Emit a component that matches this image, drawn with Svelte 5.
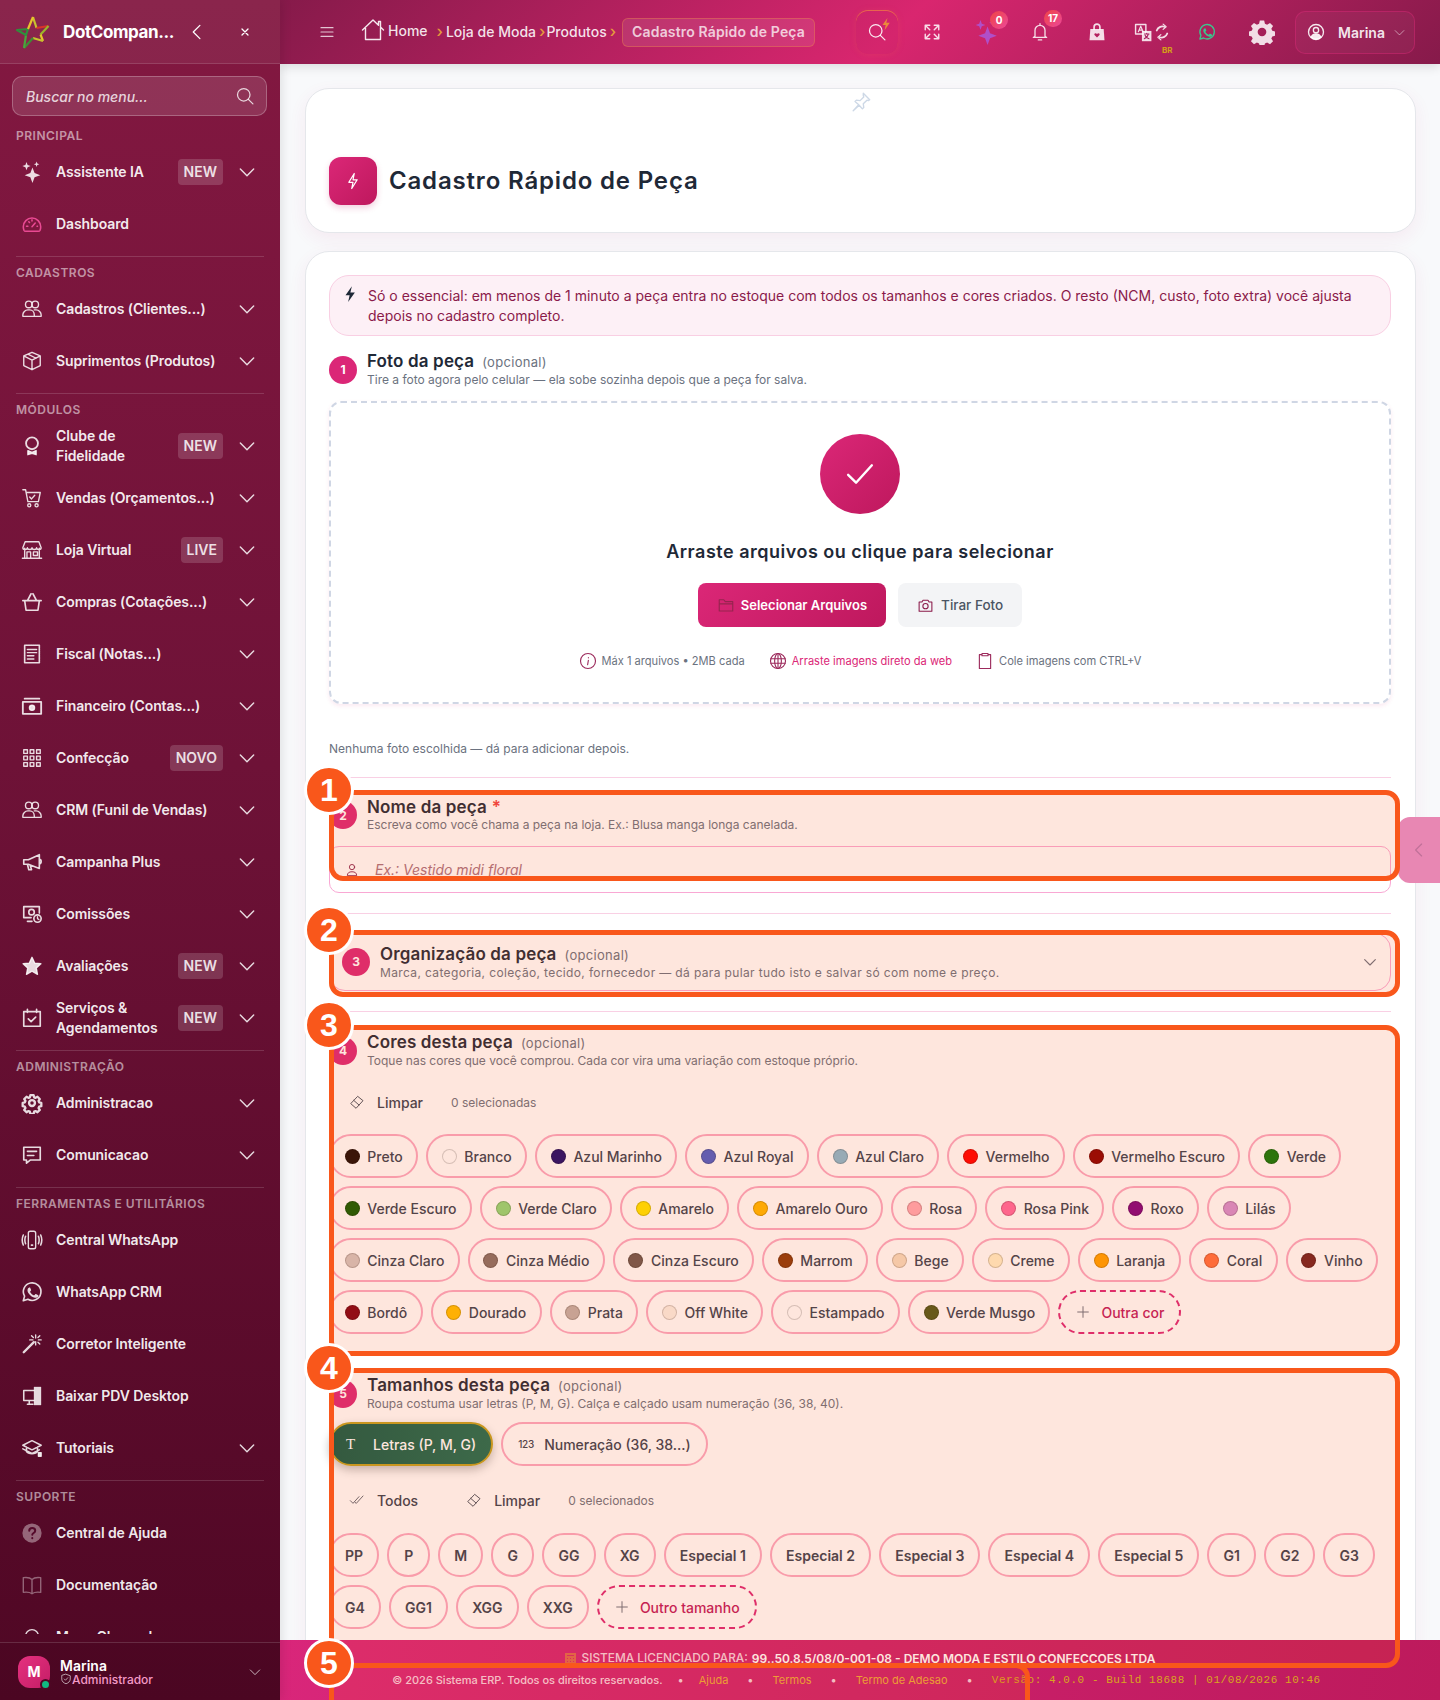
<script>
  const icons = {
    sparkles: '<path fill="currentColor" stroke="none" d="M12.500 7l2.300 6.200 6.200 2.300-6.200 2.300-2.300 6.200-2.300-6.200-6.200-2.300 6.200-2.300zM6 1l1.200 3.300L10.500 5.500 7.200 6.700 6 10 4.800 6.700 1.500 5.500l3.300-1.200zM17 0.500l.8 2.200 2.200.8-2.200.8-.8 2.200-.8-2.200-2.200-.8 2.200-.8z"/>',
    gauge: '<path d="M5 20h14a2 2 0 0 0 1.800-1.200A9.600 9.600 0 0 0 21.500 15a9.500 9.500 0 0 0-19 0c0 1.300.3 2.600.7 3.800A2 2 0 0 0 5 20z" stroke-width="1.700"/><path d="M12 15l3.500-4M6 14.500h1.500M17.500 14.500H18M8.500 9.500l.8.8M12 7.500v1.200" stroke-width="1.700"/>',
    users: '<circle cx="8.500" cy="7" r="3.600"/><circle cx="15.500" cy="7" r="3.600"/><path d="M2 20v-1.500C2 15.500 4.500 13 7.500 13h2c3 0 5 2.500 5 5.500V20zM14.500 13h2c3 0 5.500 2.500 5.500 5.500V20h-7.500"/>',
    box: '<path d="M12 2.500l9 4v10.500l-9 4.500-9-4.500V6.500zM3 6.500l9 4.500 9-4.500M12 11v10.500M7.500 4.500l9 4.500"/>',
    award: '<circle cx="12" cy="9" r="6.500" stroke-width="2"/><path fill="currentColor" d="M7.500 17l4.500 2 4.500-2v4.500L12 20l-4.500 1.500z"/>',
    cart: '<path d="M2 3h3l2.500 13h11.500l2-10H6M9.500 11l2 2 3.500-4"/><circle cx="9" cy="20" r="1.700"/><circle cx="17" cy="20" r="1.700"/>',
    store: '<path d="M4 10v11h16V10M2 9.500L4.500 3h15L22 9.500c0 1.500-1.700 2-2.500 2s-2.500-.5-2.500-2c0 1.500-1.700 2-2.500 2s-2.500-.5-2.500-2c0 1.500-1.700 2-2.500 2S7 11 7 9.500C7 11 5.300 11.500 4.500 11.500S2 11 2 9.500zM1.500 21h21M6.500 14h4v7h-4zM13.500 14h4.500v4h-4.500z"/>',
    basket: '<path d="M2 10.500h20M4 10.500L5.500 21h13L20 10.500M7 10.500L11 3M17 10.500L13 3" stroke-width="1.800"/>',
    receipt: '<path d="M4 2.500h16v19H4z" stroke-width="1.800" stroke-dasharray="1.500 .5"/><path d="M7 7h10M7 10.500h10M7 14h7M7 17.500h7" stroke-width="1.600"/>',
    cash: '<path d="M2 7.500h20v13H2zM4 4h16" stroke-width="2"/><circle cx="12" cy="14" r="2.800" fill="currentColor"/>',
    grid: '<g stroke-width="1.500"><rect x="3" y="3" width="4" height="4"/><rect x="10" y="3" width="4" height="4"/><rect x="17" y="3" width="4" height="4"/><rect x="3" y="10" width="4" height="4"/><rect x="10" y="10" width="4" height="4"/><rect x="17" y="10" width="4" height="4"/><rect x="3" y="17" width="4" height="4"/><rect x="10" y="17" width="4" height="4"/><rect x="17" y="17" width="4" height="4"/></g>',
    megaphone: '<path d="M3 9.500h5L20 4v15L8 14.500H3zM7 14.500l1.500 6h3l-1.500-5M20 9c1.500 0 2 1 2 2.500S21.500 14 20 14" stroke-width="1.800"/>',
    monitor: '<path d="M20 11V4H3v12h8M7 20h5" stroke-width="1.800"/><circle cx="11.500" cy="10" r="3" stroke-width="1.800"/><circle cx="18" cy="17" r="4" stroke-width="1.800"/><path d="M18 15v2l1.500 1"/>',
    star: '<path fill="currentColor" d="M12 2.500l2.900 6.300 6.800.8-5 4.700 1.300 6.800-6-3.400-6 3.400 1.300-6.800-5-4.700 6.800-.8z"/>',
    calendar: '<path d="M3 5h18v16H3zM7 2.500V6M17 2.500V6" stroke-width="1.800"/><path d="M8 13l3 3 5-5" stroke-width="1.800"/>',
    cog: '<path d="M10 2.500h4l.6 2.600 1.700.7 2.300-1.400 2.800 2.800-1.400 2.300.7 1.700 2.600.6v4l-2.600.6-.7 1.700 1.400 2.300-2.800 2.800-2.300-1.400-1.700.7-.6 2.600h-4l-.6-2.600-1.700-.7-2.300 1.400-2.800-2.800 1.400-2.300-.7-1.700-2.600-.6v-4l2.600-.6.7-1.700-1.400-2.300 2.800-2.800 2.300 1.400 1.700-.7z" transform="translate(1.200 1.200) scale(.9)" stroke-width="2.800"/><circle cx="12" cy="12" r="3.200" stroke-width="2.600"/>',
    chat: '<path d="M3 3.500h18v14H10l-4 3.500v-3.500H3zM7 8h10M7 12.500h7" stroke-width="1.800"/>',
    phonewave: '<rect x="8" y="2.500" width="8" height="19" rx="2"/><path d="M11.500 17.500h1" stroke-width="2"/><path d="M5 8c-1 2.500-1 5.500 0 8M2.500 6.500c-1.500 3.500-1.500 7.500 0 11M19 8c1 2.500 1 5.500 0 8M21.500 6.500c1.500 3.500 1.500 7.500 0 11" stroke-width="1.700"/>',
    whatsapp: '<path stroke-width="1.800" d="M2.500 21.500l1.400-5A9.600 9.600 0 1 1 7.500 20z"/><path fill="currentColor" stroke="none" d="M8.900 6.900c-.3 0-.8.1-1.200.6-.4.5-1.200 1.300-1.200 3s1.200 3.300 1.400 3.500c.2.200 2.400 3.700 5.800 5 2.900 1.100 3.500.9 4.100.8.6-.1 2-.8 2.300-1.600.3-.8.3-1.500.2-1.600-.1-.1-.3-.2-.7-.4l-2.400-1.200c-.3-.1-.6-.2-.8.2-.2.3-.9 1.100-1.100 1.300-.2.2-.4.3-.8.1-.4-.2-1.500-.6-2.800-1.700-1-.9-1.700-2-1.900-2.400-.2-.4 0-.6.2-.8l.6-.7c.2-.2.2-.4.4-.6.1-.2.1-.5 0-.7l-1.100-2.600c-.3-.6-.5-.6-.8-.6z" transform="translate(1.500 1.300) scale(.86)"/>',
    wand: '<path d="M3 21L14 10" stroke-width="2.600"/><path d="M16 2v3.500M16 9.500V13M9.500 7.500H13M19 7.500h3M11.500 3l2 2M20.500 3l-2 2M20.500 12l-2-2"/>',
    pdv: '<path d="M14 6H3v11h11M7 21h6M9 17v4" stroke-width="1.700"/><path fill="currentColor" stroke="none" d="M14 2h8v20h-8z"/>',
    cap: '<path d="M12 4L2 9l10 5 10-5zM6 11v5c2 3 10 3 12 0v-5M2 13l10 5 8-4" stroke-width="1.700"/><rect x="19" y="17" width="3" height="4" fill="currentColor"/>',
    help: '<circle cx="12" cy="12" r="10.500" fill="currentColor" stroke="none"/><path d="M9 9.500c0-4 6.500-4 6.500 0 0 2.500-3.200 2.500-3.200 4.500M12.300 17.500v.3" stroke="#550a2b" stroke-width="2.200"/>',
    book: '<path d="M12 6c-2-2-6-2.500-9.500-2V20c3.500-.5 7.500 0 9.500 1.500 2-1.500 6-2 9.500-1.500V4C18 3.500 14 4 12 6zM12 6v15.500"/>',
    headset: '<path d="M5 15V11a7 7 0 0 1 14 0v4"/>',
    chevron: '<path d="M4 8.500l8 8 8-8" stroke-width="1.700"/>',
    search: '<circle cx="10.500" cy="10.500" r="7.500"/><path d="M16 16l5.500 5.500"/>',
    menu: '<path d="M3 5.500h18M3 12h18M3 18.500h18" stroke-width="1.800"/>',
    house: '<path d="M1.500 12L12 2l5.500 5.200V3.500h2v5.600l3 2.900M4.500 10v11.500h15V10" stroke-width="1.400"/>',
    expand: '<path d="M9 3H3v6M15 3h6v6M9 21H3v-6M15 21h6v-6M3 3l6 6M21 3l-6 6M3 21l6-6M21 21l-6-6" stroke-width="1.900"/>',
    bell: '<path d="M6 17V10a6 6 0 0 1 12 0v7l2 1.500H4zM12 2v2M10 21.500h4" stroke-width="1.600"/>',
    bag: '<path fill="currentColor" stroke="none" d="M4 8.500h16l1 13.500H3z"/><path d="M8.500 9V6a3.500 3.500 0 0 1 7 0v3" stroke-width="2"/><path fill="#b5225f" stroke="none" d="M12 18.500l-3-3c-1-1.500 1.500-3 3-1 1.500-2 4-.5 3 1z"/>',
    translate: '<path d="M2 2h13v12H2z" stroke-width="1.800"/><path d="M5.500 11l3-7 3 7M6.500 9h4" stroke-width="1.500"/><path fill="currentColor" stroke="none" d="M10 10h12v13H10z"/><path d="M13 14h6M16 13v1M18 14c-.5 3-3 5-5 6M14 15.500c.7 2 3 4 5 4.500" stroke="#a8205f" stroke-width="1.300"/>',
    refresh: '<path d="M5 10a8 8 0 0 1 10-5M19 14a8 8 0 0 1-10 5" stroke-width="2.400"/><path d="M13.500 1.500L17.500 5l-4 3.500M10.500 22.500L6.500 19l4-3.500" stroke-width="1.600" />',
    gear: '<path fill="currentColor" stroke="none" fill-rule="evenodd" d="M10 1h4l.7 3 2 .9 2.700-1.600 2.800 2.800-1.600 2.700.9 2 3 .7v4l-3 .7-.9 2 1.600 2.700-2.800 2.800-2.700-1.600-2 .9-.7 3h-4l-.7-3-2-.9-2.700 1.600-2.800-2.800 1.600-2.700-.9-2-3-.7v-4l3-.7.9-2-1.600-2.700 2.800-2.800 2.700 1.600 2-.9zM12 8a4 4 0 1 0 0 8 4 4 0 0 0 0-8z" transform="translate(0 .5) scale(1 .96)"/>',
    user: '<circle cx="12" cy="12" r="10" stroke-width="1.800"/><circle cx="12" cy="9.500" r="3.500" stroke-width="1.800"/><path fill="currentColor" d="M5.500 19c1-3.500 3.500-4.500 6.500-4.500s5.500 1 6.500 4.500c-3 3.500-10 3.500-13 0z"/>',
    pin: '<path d="M14.500 2.500l7 7-1.500 1-1.500-.5-4 4 .5 4-1.500 1.500-3.500-4-6.500 6 6-6.500-4-3.500 1.500-1.500 4 .5 4-4-.5-1.500z"/>',
    bolt: '<path d="M13.500 3L7 13.500h5L10.500 21 17 10.500h-5z"/>',
    boltfill: '<path fill="currentColor" stroke="none" d="M14.500 1.500L6 13.500h5.500L9.500 22.500 18.500 10h-6z"/>',
    check: '<path d="M4.500 12.500l5 5 10-11"/>',
    folder: '<path d="M3 5h6l2 2.500h10V20H3zM3 10.500h18"/>',
    camera: '<path d="M3 7h4l1.500-2.500h7L17 7h4v13H3z"/><circle cx="12" cy="13" r="3.700"/>',
    info: '<circle cx="12" cy="12" r="10"/><path d="M12.500 7.500v.3M12.500 11l-1 6"/>',
    globe: '<circle cx="12" cy="12" r="10"/><ellipse cx="12" cy="12" rx="4.500" ry="10"/><path d="M2.500 9h19M2.500 15h19M12 2v20"/>',
    clipboard: '<path d="M8 3.500H4.500V22h15V3.500H16M8 2h8v3H8z"/>',
    person: '<circle cx="12" cy="7" r="4.500"/><path d="M4 21c0-4 3-6 8-6s8 2 8 6z"/>',
    eraser: '<path d="M3 14L13 3.500l8 6.500-10 11z"/><path d="M7 9.500l8 7"/>',
    checks: '<path d="M2 13l4 4L15 7M9 15.500L11 17 21 6" stroke-width="1.300"/>',
    plus: '<path d="M12 4v16M4 12h16"/>',
    left: '<path d="M15.500 4l-8 8 8 8"/>',
    close: '<path d="M6 6l12 12M18 6L6 18" stroke-width="2.600"/>',
    shield: '<path d="M12 2.500l8.500 3V12c0 5-4 8-8.500 9.500C7.500 20 3.500 17 3.500 12V5.500zM8.500 12l2.500 2.500 4.500-5"/>'
  };

  const nav = [
    { label: 'PRINCIPAL', items: [
      { text: 'Assistente IA', icon: 'sparkles', badge: 'NEW', more: true },
      { text: 'Dashboard', icon: 'gauge', tone: 'pink' }
    ]},
    { label: 'CADASTROS', items: [
      { text: 'Cadastros (Clientes...)', icon: 'users', more: true },
      { text: 'Suprimentos (Produtos)', icon: 'box', more: true }
    ]},
    { label: 'MÓDULOS', items: [
      { text: 'Clube de Fidelidade', icon: 'award', badge: 'NEW', more: true },
      { text: 'Vendas (Orçamentos...)', icon: 'cart', more: true },
      { text: 'Loja Virtual', icon: 'store', badge: 'LIVE', more: true },
      { text: 'Compras (Cotações...)', icon: 'basket', more: true },
      { text: 'Fiscal (Notas...)', icon: 'receipt', more: true },
      { text: 'Financeiro (Contas...)', icon: 'cash', more: true },
      { text: 'Confecção', icon: 'grid', badge: 'NOVO', more: true },
      { text: 'CRM (Funil de Vendas)', icon: 'users', more: true },
      { text: 'Campanha Plus', icon: 'megaphone', more: true },
      { text: 'Comissões', icon: 'monitor', more: true },
      { text: 'Avaliações', icon: 'star', badge: 'NEW', more: true },
      { text: 'Serviços & Agendamentos', icon: 'calendar', badge: 'NEW', more: true }
    ]},
    { label: 'ADMINISTRAÇÃO', items: [
      { text: 'Administracao', icon: 'cog', more: true },
      { text: 'Comunicacao', icon: 'chat', more: true }
    ]},
    { label: 'FERRAMENTAS E UTILITÁRIOS', items: [
      { text: 'Central WhatsApp', icon: 'phonewave' },
      { text: 'WhatsApp CRM', icon: 'whatsapp' },
      { text: 'Corretor Inteligente', icon: 'wand' },
      { text: 'Baixar PDV Desktop', icon: 'pdv' },
      { text: 'Tutoriais', icon: 'cap', more: true }
    ]},
    { label: 'SUPORTE', items: [
      { text: 'Central de Ajuda', icon: 'help', tone: 'dim' },
      { text: 'Documentação', icon: 'book', tone: 'dim' },
      { text: 'Meus Chamados', icon: 'headset' }
    ]}
  ];

  const colors = [
    ['Preto', '#1a0a05'], ['Branco', '#ffffff'], ['Azul Marinho', '#1a0a6e'], ['Azul Royal', '#4a5fc9'],
    ['Azul Claro', '#87b9d0'], ['Vermelho', '#ff0000'], ['Vermelho Escuro', '#8b0000'], ['Verde', '#0a7a0a'],
    ['Verde Escuro', '#0d5c00'], ['Verde Claro', '#90d97a'], ['Amarelo', '#ffe600'], ['Amarelo Ouro', '#ffb800'],
    ['Rosa', '#ffa8b4'], ['Rosa Pink', '#ff69a0'], ['Roxo', '#800080'], ['Lilás', '#d48fd0'],
    ['Cinza Claro', '#d3c5c0'], ['Cinza Médio', '#857068'], ['Cinza Escuro', '#6b5850'], ['Marrom', '#8b3a0a'],
    ['Bege', '#f5dcc0'], ['Creme', '#fff0c8'], ['Laranja', '#ffa000'], ['Coral', '#ff7040'],
    ['Vinho', '#722020'], ['Bordô', '#800015'], ['Dourado', '#ffc000'], ['Prata', '#c0b0a8'],
    ['Off White', '#faf0e6'], ['Estampado', '#ffffff'], ['Verde Musgo', '#4f5a1a']
  ];

  const sizes = ['PP', 'P', 'M', 'G', 'GG', 'XG', 'Especial 1', 'Especial 2', 'Especial 3', 'Especial 4', 'Especial 5', 'G1', 'G2', 'G3', 'G4', 'GG1', 'XGG', 'XXG'];

  // marcações laranja por cima do print
  const marks = [
    { n: 1, x: 329, y: 790, w: 1071, h: 91 },
    { n: 2, x: 329, y: 930, w: 1071, h: 67 },
    { n: 3, x: 329, y: 1025, w: 1071, h: 331 },
    { n: 4, x: 329, y: 1368, w: 1071, h: 300 },
    { n: 5, x: 329, y: 1663, w: 701, h: 60 }
  ];
</script>

{#snippet icon(name, size)}
  <svg class="ic" viewBox="0 0 24 24" width={size} height={size} fill="none" stroke="currentColor" stroke-width="1.5" stroke-linecap="round" stroke-linejoin="round">{@html icons[name]}</svg>
{/snippet}

{#snippet stepHead(n, title, note, sub, wide)}
  <div class="step-head">
    <span class="step-num">{n}</span>
    <div>
      <div class="step-title">{title}{#if note}<span class="opt">{note}</span>{:else}<span class="req">*</span>{/if}</div>
      <div class="step-sub" class:wide>{sub}</div>
    </div>
  </div>
{/snippet}

<div class="page">
  <aside class="sidebar">
    <div class="brand">
      <svg class="logo" viewBox="0 0 40 40" width="40" height="40" fill="none" stroke-width="2.200" stroke-linejoin="round">
        <path stroke="#c9c22e" d="M20 5l3.500 11"/>
        <path stroke="#d8342a" d="M23.500 16l12-2"/>
        <path stroke="#9ab52a" d="M35.500 14l-8 8.500"/>
        <path stroke="#e2c92a" d="M27.500 22.500l2.500 6.500"/>
        <path stroke="#c9c22e" d="M30 29l-10-3"/>
        <path stroke="#3c8f35" d="M20 26l-9 10"/>
        <path stroke="#4aa53c" d="M11 36l2-13"/>
        <path stroke="#2f8f3c" d="M13 23l-9-5 11-1z"/>
        <path stroke="#e8c52c" d="M15 17l5-12"/>
      </svg>
      <span class="brand-name">DotCompan...</span>
      <span class="brand-back">{@render icon('left', 20)}</span>
      <span class="brand-close">{@render icon('close', 12)}</span>
    </div>

    <div class="search">
      <span>Buscar no menu...</span>
      {@render icon('search', 20)}
    </div>

    <nav class="nav">
      {#each nav as sec}
        <section class="section">
          <div class="nav-label">{sec.label}</div>
          {#each sec.items as item}
            <div class="nav-item">
              <span class="nav-icon {item.tone || ''}">{@render icon(item.icon, 22)}</span>
              <span class="nav-text">{item.text}</span>
              {#if item.badge}<span class="badge">{item.badge}</span>{/if}
              {#if item.more}<span class="more">{@render icon('chevron', 20)}</span>{/if}
            </div>
          {/each}
        </section>
      {/each}
    </nav>

    <div class="me">
      <span class="avatar">M<i class="online"></i></span>
      <div class="me-info">
        <div class="me-name">Marina</div>
        <div class="me-role">{@render icon('shield', 12)}Administrador</div>
      </div>
      <span class="me-more">{@render icon('chevron', 14)}</span>
    </div>
  </aside>

  <div class="main">
    <header class="topbar">
      <span class="burger">{@render icon('menu', 16)}</span>
      <div class="crumbs">
        <span class="house">{@render icon('house', 24)}</span>
        <span class="crumb home">Home</span>
        <span class="sep sep-first">›</span>
        <span class="crumb">Loja de Moda</span>
        <span class="sep">›</span>
        <span class="crumb">Produtos</span>
        <span class="sep">›</span>
        <span class="crumb-now">Cadastro Rápido de Peça</span>
      </div>
      <div class="tools">
        <span class="tool tool-search">{@render icon('search', 20)}<span class="zap">{@render icon('boltfill', 14)}</span></span>
        <span class="tool">{@render icon('expand', 18)}</span>
        <span class="tool spark">{@render icon('sparkles', 26)}<b class="count c0">0</b></span>
        <span class="tool tool-bell">{@render icon('bell', 20)}<b class="count c17">17</b></span>
        <span class="tool">{@render icon('bag', 20)}</span>
        <span class="tool lang">{@render icon('translate', 19)}{@render icon('refresh', 18)}<em>BR</em></span>
        <span class="tool wa">{@render icon('whatsapp', 18)}</span>
        <span class="tool">{@render icon('gear', 26)}</span>
        <div class="user">
          {@render icon('user', 18)}
          <span>Marina</span>
          <span class="user-more">{@render icon('chevron', 13)}</span>
        </div>
      </div>
    </header>

    <main class="content">
      <div class="card title-card">
        <span class="pin">{@render icon('pin', 22)}</span>
        <span class="title-icon">{@render icon('bolt', 20)}</span>
        <h1>Cadastro Rápido de Peça</h1>
      </div>

      <div class="card form-card">
        <div class="alert">
          <span class="alert-icon">{@render icon('boltfill', 18)}</span>
          <p>Só o essencial: em menos de 1 minuto a peça entra no estoque com todos os tamanhos e cores criados. O resto (NCM, custo, foto extra) você ajusta depois no cadastro completo.</p>
        </div>

        {@render stepHead(1, 'Foto da peça', '(opcional)', 'Tire a foto agora pelo celular — ela sobe sozinha depois que a peça for salva.')}

        <div class="drop">
          <span class="drop-check">{@render icon('check', 38)}</span>
          <h2>Arraste arquivos ou clique para selecionar</h2>
          <div class="drop-btns">
            <button class="btn-primary"><span class="folder">{@render icon('folder', 18)}</span>Selecionar Arquivos</button>
            <button class="btn-soft"><span class="cam">{@render icon('camera', 17)}</span>Tirar Foto</button>
          </div>
          <div class="hints">
            <span class="hint">{@render icon('info', 18)}Máx 1 arquivos • 2MB cada</span>
            <span class="hint web">{@render icon('globe', 18)}Arraste imagens direto da web</span>
            <span class="hint">{@render icon('clipboard', 18)}Cole imagens com CTRL+V</span>
          </div>
        </div>

        <p class="no-photo">Nenhuma foto escolhida — dá para adicionar depois.</p>
        <hr />

        {@render stepHead(2, 'Nome da peça', '', 'Escreva como você chama a peça na loja. Ex.: Blusa manga longa canelada.')}
        <div class="name-input">
          {@render icon('person', 14)}
          <span>Ex.: Vestido midi floral</span>
        </div>
        <hr class="hr-tight" />

        <div class="collapse">
          {@render stepHead(3, 'Organização da peça', '(opcional)', 'Marca, categoria, coleção, tecido, fornecedor — dá para pular tudo isto e salvar só com nome e preço.', true)}
          <span class="collapse-more">{@render icon('chevron', 16)}</span>
        </div>
        <hr class="hr-collapse" />

        {@render stepHead(4, 'Cores desta peça', '(opcional)', 'Toque nas cores que você comprou. Cada cor vira uma variação com estoque próprio.')}
        <div class="actions">
          <span class="action">{@render icon('eraser', 16)}Limpar</span>
          <span class="picked">0 selecionadas</span>
        </div>
        <div class="pills">
          {#each colors as [name, hex]}
            <span class="pill"><i class="dot" style="background:{hex}"></i>{name}</span>
          {/each}
          <span class="pill pill-add"><span class="plus">{@render icon('plus', 16)}</span>Outra cor</span>
        </div>
        <hr class="hr-wide" />

        {@render stepHead(5, 'Tamanhos desta peça', '(opcional)', 'Roupa costuma usar letras (P, M, G). Calça e calçado usam numeração (36, 38, 40).')}
        <div class="toggles">
          <span class="toggle on"><span class="t-glyph">T</span>Letras (P, M, G)</span>
          <span class="toggle"><span class="t-num">123</span>Numeração (36, 38...)</span>
        </div>
        <div class="actions actions-sizes">
          <span class="action act-all">{@render icon('checks', 16)}Todos</span>
          <span class="action">{@render icon('eraser', 16)}Limpar</span>
          <span class="picked">0 selecionados</span>
        </div>
        <div class="pills">
          {#each sizes as s}
            <span class="pill pill-size">{s}</span>
          {/each}
          <span class="pill pill-add pill-add-size"><span class="plus">{@render icon('plus', 16)}</span>Outro tamanho</span>
        </div>
      </div>
    </main>

    <footer class="footer">
      <div class="lic">
        <svg width="11" height="11" viewBox="0 0 11 11" fill="#e8a030"><path d="M0 0h11v11H0z" opacity=".55"/><path fill="#d4286a" d="M2 2h7v1H2zM2 5h1v1H2zM5 5h1v1H5zM8 5h1v1H8zM2 8h1v1H2zM5 8h1v1H5zM8 8h1v1H8z"/></svg>
        <span class="lic-label">SISTEMA LICENCIADO PARA:</span> <b>99..50.8.5/08/0-001-08 - DEMO MODA E ESTILO CONFECCOES LTDA</b>
      </div>
      <div class="legal">
        <span class="copy">© 2026 Sistema ERP. Todos os direitos reservados.</span>
        <i class="first-dot">•</i><a href="#ajuda">Ajuda</a>
        <i>•</i><a href="#termos">Termos</a>
        <i>•</i><a href="#adesao">Termo de Adesao</a>
        <i>•</i><span class="ver">Versão: 4.0.0 - Build 18688 | 01/08/2026 10:46</span>
      </div>
    </footer>
  </div>

  <button class="side-tab" aria-label="Abrir painel">{@render icon('left', 18)}</button>

  {#each marks as m}
    <div class="mark" style="left:{m.x}px;top:{m.y}px;width:{m.w}px;height:{m.h}px"></div>
  {/each}
  {#each marks as m}
    <span class="mark-num" style="left:{m.x}px;top:{m.y}px">{m.n}</span>
  {/each}
</div>

<style>
  :global(body) {
    font-family: Inter, "Liberation Sans", sans-serif;
    background: #f8f9fb;
  }
  .ic { display: block; flex: none; }
  .page {
    position: relative;
    display: flex;
    width: 1440px;
    height: 1700px;
    overflow: hidden;
  }

  /* sidebar */
  .sidebar {
    width: 280px;
    flex: none;
    display: flex;
    flex-direction: column;
    background: linear-gradient(180deg, #831841 0%, #6e1237 45%, #4f0724 100%);
    color: #fff;
    box-shadow: 2px 0 10px rgba(0, 0, 0, 0.1);
    z-index: 2;
  }
  .brand {
    height: 64px;
    flex: none;
    display: flex;
    align-items: center;
    padding-left: 13px;
    background: rgba(255, 255, 255, 0.06);
    border-bottom: 1px solid rgba(255, 255, 255, 0.13);
    box-sizing: border-box;
  }
  .logo { flex: none; }
  .brand-name { margin-left: 10px; width: 114px; font-size: 17px; font-weight: 700; letter-spacing: -0.4px; }
  .brand-back { margin-left: 10px; }
  .brand-close { margin-left: 32px; }
  .search {
    margin: 12px 13px 0 12px;
    height: 40px;
    flex: none;
    box-sizing: border-box;
    display: flex;
    align-items: center;
    justify-content: space-between;
    padding: 0 11px 0 13px;
    border: 1px solid rgba(255, 255, 255, 0.25);
    border-radius: 10px;
    background: rgba(255, 255, 255, 0.12);
    font-size: 14px;
    font-style: italic;
    font-weight: 500;
    color: rgba(255, 255, 255, 0.8);
  }
  .nav {
    flex: 1;
    min-height: 0;
    overflow: hidden;
    padding-top: 4px;
    margin-bottom: 8px;
  }
  .section + .section { border-top: 1px solid rgba(255, 255, 255, 0.15); margin: 6px 16px 0; }
  .section + .section .nav-item { margin: 0 -16px; }
  .section + .section .nav-label { padding-left: 0; }
  .nav-label {
    padding: 8px 16px 2px;
    font-size: 12px;
    line-height: 16px;
    font-weight: 600;
    letter-spacing: 0.5px;
    color: rgba(255, 255, 255, 0.55);
  }
  .nav-item {
    height: 52px;
    display: flex;
    align-items: center;
    padding: 0 23px 0 21px;
    font-size: 14px;
    font-weight: 600;
    letter-spacing: -0.1px;
    line-height: 20px;
    color: rgba(255, 255, 255, 0.93);
  }
  .nav-icon { width: 22px; color: rgba(255, 255, 255, 0.85); }
  .nav-icon.pink { color: #e94a93; }
  .nav-icon.dim { color: rgba(255, 255, 255, 0.38); }
  .nav-text { margin-left: 13px; max-width: 110px; flex: 1; }
  .nav-item:not(:has(.badge)) .nav-text { max-width: none; }
  .badge {
    margin-left: auto;
    height: 26px;
    padding: 0 6px;
    border-radius: 4px;
    background: rgba(255, 255, 255, 0.16);
    font-size: 14px;
    letter-spacing: 0;
    line-height: 26px;
    color: rgba(255, 255, 255, 0.85);
  }
  .more { margin-left: 14px; color: rgba(255, 255, 255, 0.85); }
  .nav-item:not(:has(.badge)) .more { margin-left: auto; }
  .me {
    height: 58px;
    flex: none;
    box-sizing: border-box;
    display: flex;
    align-items: center;
    padding: 0 18px;
    border-top: 1px solid rgba(255, 255, 255, 0.15);
    background: rgba(0, 0, 0, 0.04);
  }
  .avatar {
    position: relative;
    width: 32px;
    height: 32px;
    border-radius: 12px;
    background: linear-gradient(135deg, #e5317f, #c41d66);
    display: flex;
    align-items: center;
    justify-content: center;
    font-size: 14px;
    font-weight: 700;
  }
  .online {
    position: absolute;
    right: -1px;
    bottom: -2px;
    width: 7px;
    height: 7px;
    border-radius: 50%;
    background: #10b981;
    border: 2px solid #4f0724;
  }
  .me-info { margin-left: 10px; flex: 1; padding-top: 1px; }
  .me-name { font-size: 14px; line-height: 14px; font-weight: 600; }
  .me-role {
    display: flex;
    align-items: center;
    font-size: 12px;
    line-height: 13px;
    font-weight: 500;
    color: #f49ac7;
  }
  .me-role :global(svg) { color: rgba(255, 255, 255, 0.8); }
  .me-more { color: rgba(255, 255, 255, 0.7); }

  /* top bar */
  .main {
    flex: 1;
    min-width: 0;
    display: flex;
    flex-direction: column;
  }
  .topbar {
    height: 64px;
    flex: none;
    display: flex;
    align-items: center;
    padding: 0 25px 0 39px;
    background: linear-gradient(135deg, #861a4a 0%, #d9266f 53%, #861a4a 100%);
    color: rgba(255, 255, 255, 0.9);
    box-shadow: 0 3px 10px rgba(0, 0, 0, 0.12);
    z-index: 1;
  }
  .burger { color: rgba(255, 255, 255, 0.75); }
  .crumbs { display: flex; align-items: center; margin-left: 26px; font-size: 14px; font-weight: 500; padding-bottom: 2px; }
  .house { margin-right: 3px; margin-top: -2px; }
  .crumb { color: rgba(255, 255, 255, 0.88); }
  .home { margin-top: -2px; }
  .sep { margin: 0 1px 0 3px; font-size: 16px; line-height: 16px; color: #e59a3c; }
  .sep-first { margin: 0 3px 0 9px; }
  .crumb-now {
    margin: 2px 0 0 5px;
    padding: 0 9px 2px;
    height: 29px;
    box-sizing: border-box;
    display: flex;
    align-items: center;
    border: 1px solid rgba(229, 120, 80, 0.5);
    border-radius: 6px;
    background: rgba(255, 255, 255, 0.09);
    font-weight: 600;
    letter-spacing: 0.15px;
    color: rgba(255, 255, 255, 0.75);
  }
  .tools { margin-left: auto; display: flex; align-items: center; gap: 13px; }
  .tool {
    position: relative;
    width: 42px;
    height: 43px;
    border-radius: 12px;
    display: flex;
    align-items: center;
    justify-content: center;
    color: rgba(255, 255, 255, 0.85);
  }
  .tool-search {
    background: rgba(0, 0, 0, 0.015);
    box-shadow: 0 -1px 0 rgba(245, 140, 60, 0.6), 0 0 6px rgba(230, 90, 80, 0.25);
    color: rgba(255, 255, 255, 0.9);
  }
  .zap { position: absolute; top: 6px; right: 5px; color: #ec8a3a; }
  .spark { color: #b04fc8; }
  .tool-bell { box-sizing: border-box; padding-right: 4px; }
  .count {
    position: absolute;
    min-width: 18px;
    height: 17px;
    border-radius: 9px;
    background: linear-gradient(135deg, #ef4444, #ec4899);
    color: #fff;
    font-size: 10px;
    font-weight: 700;
    line-height: 17px;
    text-align: center;
  }
  .c0 { top: 0px; left: 24px; height: 18px; line-height: 18px; }
  .c17 { top: -1px; left: 23px; }
  .lang { gap: 0; }
  .lang em {
    position: absolute;
    left: 31px;
    bottom: -1px;
    font-size: 8px;
    font-weight: 700;
    font-style: normal;
    color: #d4a017;
  }
  .wa { color: #3cc48d; }
  .user {
    margin-left: -1px;
    width: 120px;
    height: 43px;
    box-sizing: border-box;
    display: flex;
    align-items: center;
    padding-left: 11px;
    border: 1px solid rgba(219, 39, 119, 0.45);
    border-radius: 10px;
    background: rgba(255, 255, 255, 0.035);
    font-size: 14px;
    font-weight: 600;
  }
  .user span { margin-left: 13px; }
  .user .user-more { margin-left: 8px; color: rgba(255, 255, 255, 0.55); }

  /* content */
  .content {
    flex: 1;
    min-height: 0;
    overflow: hidden;
    padding: 24px 24px 0 25px;
    background: #f8f9fb;
    box-sizing: border-box;
  }
  .card {
    position: relative;
    background: #fff;
    border: 1px solid #e5e7eb;
    border-radius: 24px;
    box-shadow: 0 6px 18px rgba(219, 39, 119, 0.07);
    box-sizing: border-box;
  }
  .title-card {
    height: 145px;
    display: flex;
    align-items: flex-end;
    gap: 12px;
    padding: 0 23px 27px;
    margin-bottom: 18px;
  }
  .pin { position: absolute; top: 2px; left: 544px; color: #cdd8e6; }
  .title-icon {
    width: 48px;
    height: 48px;
    border-radius: 12px;
    background: linear-gradient(135deg, #db2777, #be185d);
    color: #fff;
    display: flex;
    align-items: center;
    justify-content: center;
    box-shadow: 0 3px 6px rgba(190, 24, 93, 0.2);
  }
  h1 {
    margin: auto 0 1px;
    padding-top: 1px;
    height: 46px;
    line-height: 46px;
    font-size: 24px;
    font-weight: 600;
    letter-spacing: 0.83px;
    color: #1f2937;
  }
  .form-card { padding: 23px 24px 0 23px; height: 1500px; }
  .alert {
    display: flex;
    box-sizing: border-box;
    padding: 10px 20px 10px 11px;
    border: 1px solid #f9cfe3;
    border-radius: 20px;
    background: #fdf0f6;
    margin-bottom: 15px;
  }
  .alert-icon { color: #1f2937; margin-top: -1px; width: 18px; flex: none; }
  .alert p {
    margin: 0 0 0 9px;
    font-size: 14px;
    line-height: 19.6px;
    color: #8a1a4a;
  }
  .step-head { display: flex; align-items: center; gap: 10px; }
  .step-num {
    width: 28px;
    height: 28px;
    flex: none;
    border-radius: 50%;
    background: #db2777;
    color: #fff;
    font-size: 12px;
    font-weight: 700;
    display: flex;
    align-items: center;
    justify-content: center;
  }
  .step-title {
    font-size: 17px;
    line-height: 20px;
    font-weight: 600;
    letter-spacing: 0.15px;
    color: #1f2937;
  }
  .opt { margin-left: 8px; font-size: 13px; font-weight: 400; letter-spacing: 0.3px; color: #6b7280; }
  .req { margin-left: 5px; font-size: 17px; color: #ef4444; }
  .step-sub { font-size: 12px; line-height: 16px; color: #6b7280; }
  .step-sub.wide { letter-spacing: 0.36px; line-height: 15px; }
  .drop {
    margin-top: 13px;
    height: 303px;
    box-sizing: border-box;
    padding-top: 31px;
    display: flex;
    flex-direction: column;
    align-items: center;
    border: 2px dashed #cfd6e4;
    border-radius: 12px;
    box-shadow: 0 2px 4px rgba(219, 39, 119, 0.1);
  }
  .drop-check {
    width: 80px;
    height: 80px;
    border-radius: 50%;
    background: linear-gradient(135deg, #db2777, #be185d);
    color: #fff;
    display: flex;
    align-items: center;
    justify-content: center;
  }
  h2 {
    margin: 24px 0 18px;
    font-size: 18px;
    line-height: 27px;
    font-weight: 600;
    letter-spacing: 0.5px;
    color: #1f2937;
  }
  .drop-btns { display: flex; gap: 12px; }
  .drop-btns button {
    height: 44px;
    border: 0;
    border-radius: 8px;
    display: flex;
    align-items: center;
    gap: 6px;
    padding: 0 19px;
    font-family: inherit;
    font-size: 13px;
    font-weight: 600;
  }
  .btn-primary { background: linear-gradient(135deg, #db2777, #be185d); color: #fff; }
  .folder { color: #97244f; }
  .drop-btns .btn-soft { background: #f3f4f6; color: #4b5563; font-weight: 500; font-size: 13.5px; }
  .cam { color: #8a1a4a; margin-right: 1px; }
  .hints { margin-top: 25px; display: flex; gap: 24px; font-size: 11.1px; line-height: 18px; color: #6b7280; }
  .hint { display: flex; align-items: center; gap: 5px; }
  .hint :global(svg) { color: #9c2a5c; }
  .web { color: #db2777; }
  .no-photo { margin: 37px 0 20px; font-size: 12px; line-height: 16px; color: #6b7280; }
  hr { border: 0; border-top: 1px solid #f9d0e4; margin: 0 0 19px; }
  .name-input {
    margin-top: 13px;
    height: 47px;
    box-sizing: border-box;
    display: flex;
    align-items: center;
    gap: 16px;
    padding-left: 15px;
    border: 1px solid #f9a8d4;
    border-radius: 10px;
    font-size: 14px;
    font-style: italic;
    color: #a9717f;
  }
  .name-input :global(svg) { color: #831843; }
  .hr-tight { margin: 20px 0 19px; }
  .collapse {
    position: relative;
    height: 58px;
    box-sizing: border-box;
    display: flex;
    align-items: center;
    padding-left: 12px;
    padding-bottom: 1px;
    border: 1px solid #f9a8d4;
    border-radius: 16px;
  }
  .collapse-more { position: absolute; right: 12px; top: 20px; color: #6b7280; }
  .hr-collapse { margin: 20px 0; }
  .actions { display: flex; align-items: center; height: 36px; margin: 15px 0 14px; padding-left: 20px; font-size: 14px; }
  .action { display: flex; align-items: center; gap: 12px; font-weight: 500; color: #374151; }
  .action :global(svg) { color: #4b5563; }
  .picked { margin-left: 28px; font-size: 12px; color: #6b7280; }
  .act-all { margin-right: 48px; }
  .actions-sizes { margin: 16px 0 15px; }
  .pills { display: flex; flex-wrap: wrap; gap: 8px; }
  .pill {
    height: 44px;
    box-sizing: border-box;
    display: inline-flex;
    align-items: center;
    padding: 0 13.3px;
    border: 2px solid #f9a8c4;
    border-radius: 22px;
    font-size: 14px;
    font-weight: 500;
    color: #374151;
    background: transparent;
  }
  .dot {
    width: 15px;
    height: 15px;
    box-sizing: border-box;
    border-radius: 50%;
    border: 1px solid rgba(0, 0, 0, 0.18);
    margin-right: 7.5px;
    margin-left: 0.5px;
  }
  .pill-size { padding: 0 14.1px; font-weight: 600; justify-content: center; min-width: 43px; color: #374151; }
  .pill-add { border-style: dashed; border-color: #db2777; color: #be185d; padding: 0 15px; gap: 10px; }
  .plus { color: #6b7280; }
  .hr-wide { margin: 20px 0 20px; }
  .toggles { display: flex; gap: 8px; margin-top: 10px; }
  .toggle {
    height: 44px;
    box-sizing: border-box;
    display: inline-flex;
    align-items: center;
    padding: 0 15px;
    border: 2px solid #f9a8c4;
    border-radius: 22px;
    font-size: 14px;
    font-weight: 500;
    color: #374151;
  }
  .toggle.on {
    background: linear-gradient(90deg, #125a46, #1d6d52);
    border-color: #c1a220;
    color: #fff;
    box-shadow: 0 4px 10px rgba(0, 0, 0, 0.25);
  }
  .t-glyph { width: 14px; margin-right: 13px; font-family: "Liberation Serif", serif; font-size: 15px; }
  .t-num { margin-right: 10px; font-size: 10px; letter-spacing: -0.2px; }

  /* footer */
  .footer {
    height: 60px;
    flex: none;
    box-sizing: border-box;
    padding-top: 11px;
    background: linear-gradient(100deg, #d9267a 0%, #bd1a5c 100%);
    color: rgba(255, 255, 255, 0.8);
    text-align: center;
    z-index: 1;
  }
  .lic {
    display: flex;
    justify-content: center;
    align-items: center;
    gap: 6px;
    font-size: 12px;
    line-height: 15px;
    font-weight: 500;
    white-space: pre;
  }
  .lic-label { font-size: 11.85px; }
  .lic b { color: #fff; font-weight: 600; margin-left: -2px; }
  .legal {
    margin-top: 7px;
    padding-right: 7px;
    display: flex;
    justify-content: center;
    align-items: center;
    font-size: 11px;
    line-height: 15px;
  }
  .copy { font-weight: 500; }
  .legal i { margin: 0 19px; font-style: normal; }
  .legal .first-dot { margin: 0 15px; }
  .legal a { color: #eaa83a; text-decoration: none; }
  .ver { font-family: "Liberation Mono", monospace; letter-spacing: 0.55px; color: #d9a520; }

  /* overlays */
  .side-tab {
    position: absolute;
    top: 817px;
    right: 0;
    width: 42px;
    height: 66px;
    border: 0;
    border-radius: 12px 0 0 12px;
    background: #e887b3;
    color: rgba(100, 60, 90, 0.3);
    padding: 0 0 0 12px;
    z-index: 3;
  }
  .mark {
    position: absolute;
    box-sizing: border-box;
    border: 5px solid #f9571b;
    border-radius: 14px;
    background: rgba(249, 87, 27, 0.15);
    z-index: 4;
  }
  .mark-num {
    position: absolute;
    width: 50px;
    height: 50px;
    margin: -25px 0 0 -25px;
    box-sizing: border-box;
    border: 3px solid #fff;
    border-radius: 50%;
    background: #f9571b;
    color: #fff;
    font-family: "Liberation Sans", sans-serif;
    font-size: 32px;
    font-weight: 700;
    line-height: 44px;
    text-align: center;
    z-index: 5;
  }
</style>
